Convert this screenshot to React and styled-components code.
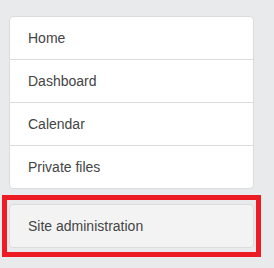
import React from "react";
import styled, { createGlobalStyle } from "styled-components";

const GlobalStyle = createGlobalStyle`
  html, body {
    margin: 0;
    padding: 0;
    background: #e9eaec;
  }
  body {
    font-family: "Liberation Sans", Arial, sans-serif;
  }
`;

const Page = styled.div`
  width: 274px;
  height: 268px;
  padding-top: 16px;
  box-sizing: border-box;
`;

const Card = styled.ul`
  list-style: none;
  margin: 0 0 0 9px;
  padding: 0;
  width: 245px;
  background: #fff;
  border: 1px solid #dcdcdc;
  border-radius: 4px;
  box-sizing: border-box;
`;

const Item = styled.li`
  display: flex;
  align-items: center;
  height: 42px;
  padding-left: 18px;
  font-size: 14px;
  color: #444;
  border-top: ${(p) => (p.$first ? "none" : "1px solid #dcdcdc")};
`;

const Highlight = styled.div`
  margin: 6px 0 0 2px;
  width: 259px;
  height: 62px;
  border: 5px solid #ed1c24;
  box-sizing: border-box;
  padding: 4px 2px;
`;

const AdminLink = styled.div`
  display: flex;
  align-items: center;
  height: 44px;
  width: 245px;
  box-sizing: border-box;
  padding-left: 18px;
  background: #f3f3f3;
  border: 1px solid #dcdcdc;
  border-radius: 4px;
  font-size: 14px;
  color: #444;
`;

const items = ["Home", "Dashboard", "Calendar", "Private files"];

export default function App() {
  return (
    <>
      <GlobalStyle />
      <Page>
        <Card>
          {items.map((label, i) => (
            <Item key={label} $first={i === 0}>
              {label}
            </Item>
          ))}
        </Card>
        <Highlight>
          <AdminLink>Site administration</AdminLink>
        </Highlight>
      </Page>
    </>
  );
}
